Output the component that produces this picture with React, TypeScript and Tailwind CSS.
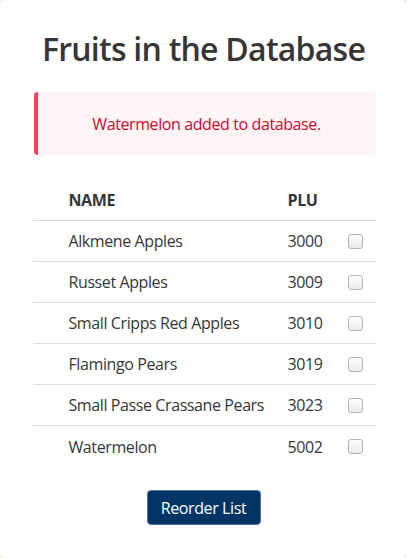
import React from "react";

const rows = [
  { name: "Alkmene Apples", plu: "3000" },
  { name: "Russet Apples", plu: "3009" },
  { name: "Small Cripps Red Apples", plu: "3010" },
  { name: "Flamingo Pears", plu: "3019" },
  { name: "Small Passe Crassane Pears", plu: "3023" },
  { name: "Watermelon", plu: "5002" },
];

function Check() {
  return (
    <div className="w-[15px] h-[15px] rounded-[3px] border border-[#b8b2aa] bg-gradient-to-b from-[#fdfdfd] to-[#ebebeb]" />
  );
}

export default function App() {
  return (
    <div className="w-[407px] h-[558px] bg-[#eef3e6] tracking-[-0.4px]" style={{ fontFamily: '"Open Sans", "Noto Sans", sans-serif' }}>
      <div className="w-full h-full bg-white rounded-[6px] flex flex-col items-center pt-[29px]">
        <h1 className="text-[32px] leading-[40px] font-semibold text-[#363636] tracking-[-0.75px]">Fruits in the Database</h1>
        <div className="mt-[23px] w-[342px] h-[63px] ml-[2px] bg-[#fff5f7] rounded-[4px] border-l-[4px] border-[#ff3860] flex items-center justify-center text-[#cd0930] text-[16px]">
          Watermelon added to database.
        </div>
        <div className="mt-[25px] w-[343px] ml-[1px] text-[#363636] text-[16px]">
          <div className="grid grid-cols-[36px_219px_60px_28px] h-[41px] items-center border-b border-[#dbdbdb] font-bold">
            <div />
            <div>NAME</div>
            <div>PLU</div>
            <div />
          </div>
          {rows.map((r, i) => (
            <div key={r.plu} className={"grid grid-cols-[36px_219px_60px_28px] h-[41px] items-center " + (i < rows.length - 1 ? "border-b border-[#dbdbdb]" : "")}>
              <div />
              <div>{r.name}</div>
              <div>{r.plu}</div>
              <div className="flex"><Check /></div>
            </div>
          ))}
        </div>
        <button className="mt-[23px] w-[114px] h-[35px] rounded-[4px] bg-[#003366] border border-[#5a6f8a] text-white text-[16px]">
          Reorder List
        </button>
      </div>
    </div>
  );
}
